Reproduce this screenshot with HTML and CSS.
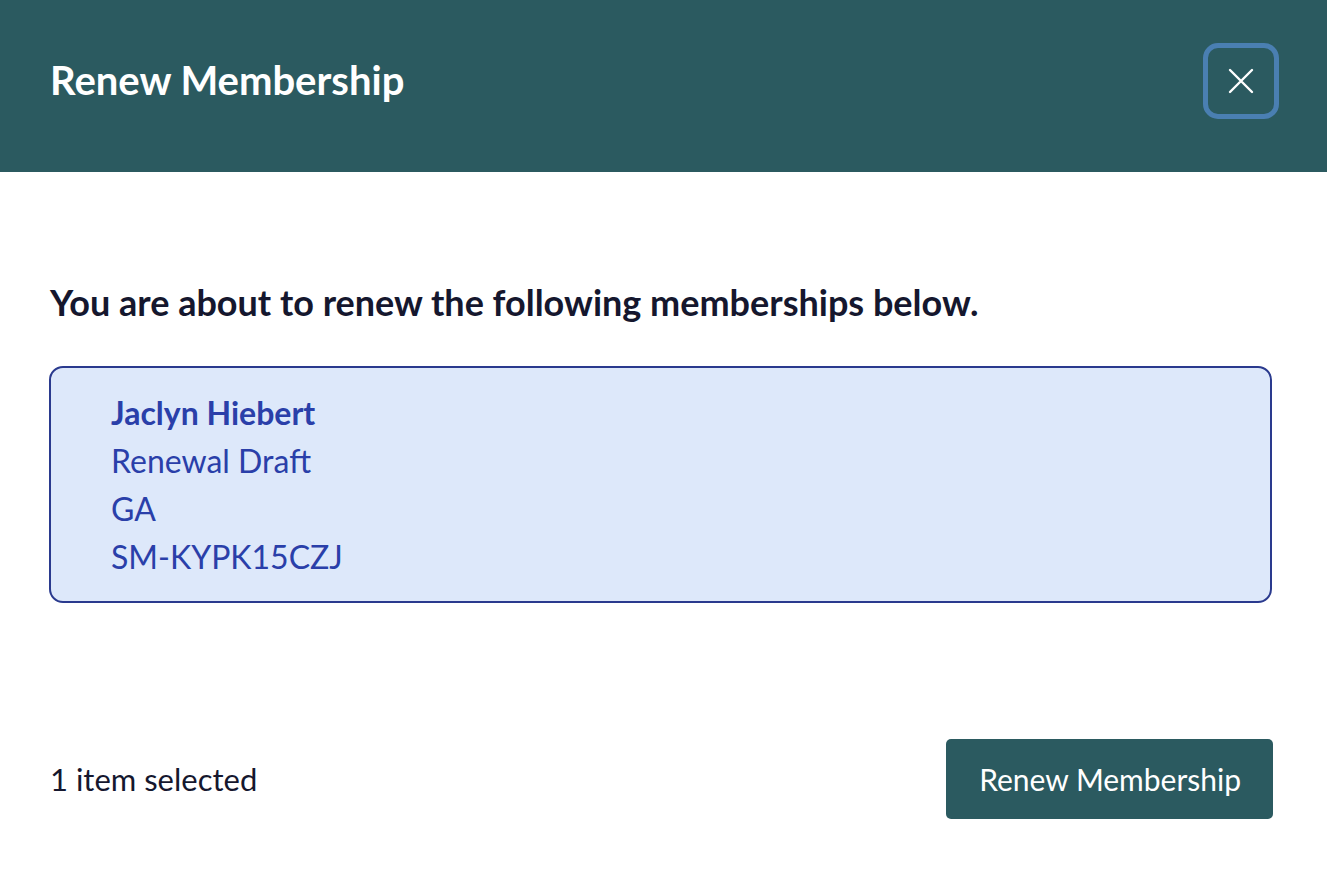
FILE: index.html
```html
<!DOCTYPE html>
<html lang="en">
<head>
<meta charset="utf-8">
<title>Renew Membership</title>
<link rel="stylesheet" href="styles.css">
</head>
<body>
<div class="modal">
  <header class="modal-header">
    <h1 class="modal-title">Renew Membership</h1>
    <button class="close-btn" aria-label="Close">
      <svg width="26" height="26" viewBox="0 0 26 26" fill="none" stroke="#ffffff" stroke-width="2.4" stroke-linecap="round">
        <path d="M2 2 L24 24 M24 2 L2 24"/>
      </svg>
    </button>
  </header>
  <main class="modal-body">
    <p class="lead">You are about to renew the following memberships below.</p>
    <div class="member-card">
      <div class="member-name">Jaclyn Hiebert</div>
      <div class="member-line">Renewal Draft</div>
      <div class="member-line">GA</div>
      <div class="member-line">SM-KYPK15CZJ</div>
    </div>
  </main>
  <footer class="modal-footer">
    <span class="selected-count">1 item selected</span>
    <button class="primary-btn">Renew Membership</button>
  </footer>
</div>
</body>
</html>
```
FILE: styles.css
```css
* { box-sizing: border-box; }
html, body { margin: 0; padding: 0; background: #ffffff; }
body { font-family: Lato, "Noto Sans", sans-serif; color: #15172e; }
.modal { width: 1327px; height: 876px; display: flex; flex-direction: column; }
.modal-header {
  height: 172px;
  background: #2b5a60;
  display: flex;
  align-items: center;
  justify-content: space-between;
  padding: 0 48px 0 50px;
}
.modal-title {
  margin: 0;
  color: #ffffff;
  font-size: 40px;
  font-weight: 700;
  line-height: 48px;
  position: relative;
  top: -6px;
}
.close-btn {
  width: 76px;
  height: 76px;
  border: 5px solid #4a7fb2;
  border-radius: 15px;
  background: transparent;
  display: flex;
  align-items: center;
  justify-content: center;
  padding: 0;
  position: relative;
  top: -5px;
}
.modal-body { padding: 106px 55px 0 49px; }
.lead {
  margin: 0 0 40px 1px;
  font-size: 36px;
  font-weight: 700;
  line-height: 48px;
  color: #15172e;
}
.member-card {
  border: 2px solid #2a3a8e;
  border-radius: 14px;
  background: #dde8fa;
  padding: 21px 60px 20px 60px;
  color: #2a3fa9;
  font-size: 32px;
  line-height: 48px;
}
.member-name { font-weight: 700; }
.modal-footer {
  margin-top: auto;
  display: flex;
  align-items: center;
  justify-content: space-between;
  padding: 0 54px 57px 50px;
}
.selected-count { font-size: 31px; color: #15172e; }
.primary-btn {
  height: 80px;
  padding: 0 32px 0 33px;
  background: #2b5a60;
  color: #ffffff;
  border: none;
  border-radius: 5px;
  font-family: Lato, "Noto Sans", sans-serif;
  font-size: 30px;
}
```
